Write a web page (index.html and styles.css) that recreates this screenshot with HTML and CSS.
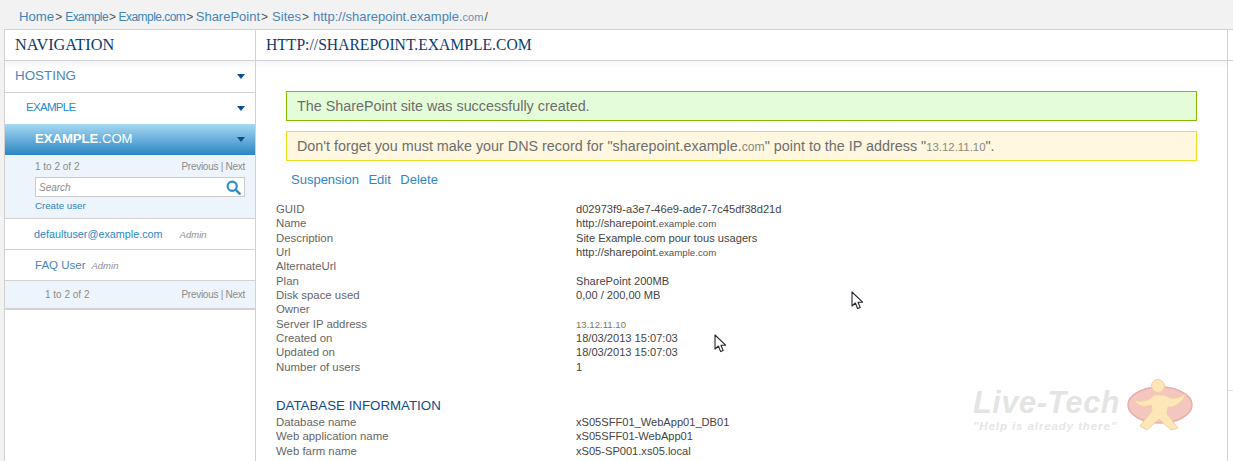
FILE: index.html
```html
<!DOCTYPE html>
<html lang="en">
<head>
    <meta charset="UTF-8">
    <title>SharePoint site</title>
    <link rel="stylesheet" href="styles.css">
</head>
<body>
    <div class="crumbs">
        <a class="big" href="#">Home</a><span class="sep">&gt;</span>
        <a class="thin" href="#">Example</a><span class="sep">&gt;</span>
        <a class="thin" href="#">Example.com</a><span class="sep">&gt;</span>
        <a class="mid" href="#">SharePoint</a><span class="sep">&gt;</span>
        <a class="mid" href="#">Sites</a><span class="sep">&gt;</span>
        <a class="mid" href="#">http://sharepoint.example.<small>com</small></a><span class="sep">/</span>
    </div>
    <div class="frame">
        <div class="sidebar">
            <h2 class="panel-title nav-title">NAVIGATION</h2>
            <div class="menu-row level1"><a href="#">HOSTING</a><i class="caret"></i></div>
            <div class="menu-row level2"><a href="#">EXAMPLE</a><i class="caret"></i></div>
            <div class="menu-row level3"><a href="#"><b>EXAMPLE</b>.COM</a><i class="caret"></i></div>
            <div class="user-tools">
                <div class="pager"><span>1 to 2 of 2</span><span class="links">Previous | Next</span></div>
                <div class="search">
                    <span>Search</span>
                    <svg width="15" height="15" viewBox="0 0 15 15"><circle cx="6.2" cy="6.2" r="4.6" fill="none" stroke="#2f8fcb" stroke-width="2.2"/><path d="M9.6 9.6 13.6 13.6" stroke="#2f8fcb" stroke-width="2.6" stroke-linecap="round"/></svg>
                </div>
                <a class="create" href="#">Create user</a>
            </div>
            <div class="user-row first"><a href="#">defaultuser@example.com</a><em>Admin</em></div>
            <div class="user-row"><a class="faq" href="#">FAQ User</a><em>Admin</em></div>
            <div class="pager bottom"><span>1 to 2 of 2</span><span class="links">Previous | Next</span></div>
        </div>
        <div class="main">
            <h2 class="panel-title">HTTP://SHAREPOINT.EXAMPLE.COM</h2>
            <div class="content">
                <div class="notice ok">The SharePoint site was successfully created.</div>
                <div class="notice warn">Don't forget you must make your DNS record for "sharepoint.example.<small>com</small>" point to the IP address "<small class="ip">13.12.11.10</small>".</div>
                <div class="actions"><a href="#">Suspension</a><a href="#">Edit</a><a href="#">Delete</a></div>
                <dl class="info">
                    <dt>GUID</dt><dd>d02973f9-a3e7-46e9-ade7-7c45df38d21d</dd>
                    <dt>Name</dt><dd>http://sharepoint.<small>example.com</small></dd>
                    <dt>Description</dt><dd>Site Example.com pour tous usagers</dd>
                    <dt>Url</dt><dd>http://sharepoint.<small>example.com</small></dd>
                    <dt>AlternateUrl</dt><dd></dd>
                    <dt>Plan</dt><dd>SharePoint 200MB</dd>
                    <dt>Disk space used</dt><dd>0,00 / 200,00 MB</dd>
                    <dt>Owner</dt><dd></dd>
                    <dt>Server IP address</dt><dd><small class="ip">13.12.11.10</small></dd>
                    <dt>Created on</dt><dd>18/03/2013 15:07:03</dd>
                    <dt>Updated on</dt><dd>18/03/2013 15:07:03</dd>
                    <dt>Number of users</dt><dd>1</dd>
                </dl>
                <h3 class="db-title">DATABASE INFORMATION</h3>
                <dl class="info">
                    <dt>Database name</dt><dd>xS05SFF01_WebApp01_DB01</dd>
                    <dt>Web application name</dt><dd>xS05SFF01-WebApp01</dd>
                    <dt>Web farm name</dt><dd>xS05-SP001.xs05.local</dd>
                </dl>
            </div>
        </div>
        <div class="edge"></div>
    </div>

    <svg class="cursor cursor-a" width="14" height="20" viewBox="0 0 14 20"><path d="M1 1V15L4.4 12 6.6 17.6 9.2 16.6 7 11.2H11.6Z" fill="#fff" stroke="#23232b" stroke-width="1.1" stroke-linejoin="round"/></svg>
    <svg class="cursor cursor-b" width="14" height="20" viewBox="0 0 14 20"><path d="M1 1V15L4.4 12 6.6 17.6 9.2 16.6 7 11.2H11.6Z" fill="#fff" stroke="#23232b" stroke-width="1.1" stroke-linejoin="round"/></svg>

    <div class="brand">
        <div class="brand-text">
            <div class="brand-name">Live-Tech</div>
            <div class="brand-tag">"Help is already there"</div>
        </div>
        <svg class="brand-mark" width="68" height="54" viewBox="0 0 68 54">
            <ellipse cx="34" cy="27" rx="32" ry="18" fill="#f3c6c0" stroke="#e8b0a8" stroke-width="1.5"/>
            <circle cx="32" cy="8" r="6.5" fill="#fde6b8" stroke="#f0cfa0"/>
            <path d="M8 22C16 25 24 22 28 17H38C44 21 52 22 60 15 57 25 48 30 42 29L41 36 52 50 45 52 33 41 21 52 14 48 26 33 25 27C18 30 12 28 8 22Z" fill="#fde6b8" stroke="#f0cfa0"/>
        </svg>
    </div>
</body>
</html>
```

FILE: styles.css
```css
html, body {height: 461px; overflow: hidden;}
body {margin: 0; background: #f2f2f2; font-family: "Liberation Sans", Arial, sans-serif; font-size: 12px; color: #555; position: relative;}
a {text-decoration: none; color: #2f86c1;}
small {font-size: 0.85em; color: #6f8fae;}

/* breadcrumb */
.crumbs {display: flex; align-items: baseline; height: 29px; box-sizing: border-box; padding: 9px 0 0 19px; line-height: 16px; white-space: nowrap; color: #555;}
.crumbs a {color: #3a86bb;}
.crumbs .big {font-size: 13.2px;}
.crumbs .thin {font-size: 12px; letter-spacing: -0.55px;}
.crumbs .mid {font-size: 13px; color: #4a85b5;}
.crumbs .sep {font-size: 12px; margin: 0 3px 0 1px;}
.crumbs .thin + .sep {margin-right: 2.5px;}
.crumbs .mid + .sep {margin-right: 4px;}

.frame {display: flex; height: 432px; margin-left: 4px; background: #fff; border-top: 1px solid #d2d2d2; border-left: 1px solid #d2d2d2;}
.panel-title {margin: 0; height: 31px; box-sizing: border-box; padding: 6px 0 0 10px; line-height: 18px; font-family: "Liberation Serif", "Times New Roman", serif; font-size: 15.65px; font-weight: normal; color: #0f3c6e; border-bottom: 1px solid #d2d2d2;}
.nav-title {font-size: 16.3px;}

/* sidebar */
.sidebar {width: 250px; flex: none; border-right: 1px solid #d2d2d2; display: flex; flex-direction: column;}
.menu-row {display: flex; align-items: center; justify-content: space-between; padding-right: 10px;}
.menu-row a {padding-bottom: 2px;}
.caret {width: 0; height: 0; border-left: 4.5px solid transparent; border-right: 4.5px solid transparent; border-top: 5px solid #0e4f87;}
.level1 {height: 31px; padding-left: 10px; font-size: 13.4px; border-bottom: 1px solid #d2d2d2; background: linear-gradient(#f3f5f8, #fff 8px);}
.level1 a {color: #4a86b8;}
.level2 {height: 31px; padding-left: 21px; font-size: 11.5px; letter-spacing: -0.7px;}
.level2 a {color: #1f8ccb; padding-bottom: 4px;}
.level3 {height: 31px; padding-left: 30px; font-size: 13.1px; background: linear-gradient(#a6d9f2, #2a85c4);}
.level3 a {color: #fff;}
.user-tools {background: #edf4fb; padding: 6px 10px 0 30px; border-bottom: 1px solid #d2d2d2; height: 64px; box-sizing: border-box;}
.pager {display: flex; justify-content: space-between; font-size: 10px; line-height: 12px; color: #8c8c8c;}
.pager .links {letter-spacing: -0.27px;}
.search {display: flex; justify-content: space-between; align-items: center; box-sizing: border-box; height: 20px; margin: 4px 0 2px; padding: 0 3px; background: #fff; border: 1px solid #ccc; font-size: 10px; font-style: italic; color: #8c8c8c;}
.create {display: block; font-size: 9.7px; line-height: 14px;}
.user-row {height: 31px; box-sizing: border-box; border-bottom: 1px solid #d2d2d2; padding-left: 30px; display: flex; align-items: center; font-size: 10.8px;}
.user-row a {color: #2f86c1;}
.user-row.first {padding-left: 29px;}
.user-row.first em {margin-left: 17px;}
.user-row em {color: #8f8f8f; font-size: 9.5px; margin-left: 6px;}
.user-row .faq {color: #4a85b5; font-size: 11.5px;}
.pager.bottom {background: #edf4fb; height: 29px; box-sizing: border-box; padding: 8px 10px 0 40px; border-bottom: 2px solid #d2d2d2;}

/* main */
.main {flex: 1; min-width: 0;}
.content {padding: 30px 30px 0 20px; background: linear-gradient(#f4f6f9, #fff 8px) top / 100% 8px no-repeat; height: 400px; box-sizing: border-box;}
.notice {box-sizing: border-box; height: 30px; margin: 0 0 10px 10px; padding: 0 10px; line-height: 29px; font-size: 14.35px; color: #6e6e6e;}
.ok {background: #e4fdd8; border: 1px solid #84bb00;}
.warn {background: #fff7e0; border: 1px solid #eedd22;}
.notice small {color: #8a8a7a;}
.actions {display: flex; gap: 9.5px; margin: 11px 0 14px 15px; font-size: 13px; line-height: 16px;}
.actions a {color: #2f86c1;}
.info {display: grid; grid-template-columns: 300px 1fr; grid-auto-rows: 14.35px; margin: 0; line-height: 14.35px; color: #444;}
.info dt {font-size: 11.4px; color: #666;}
.info dd {margin: 0; font-size: 11.1px;}
.info small {font-size: 9.7px; color: #555;}
.info small.ip {font-size: 9.6px; color: #7a7a50;}
.notice small.ip {font-size: 11.4px;}
.db-title {margin: 24px 0 1px; font-size: 13.3px; font-weight: normal; line-height: 16px; color: #0f4a8a;}

.edge {width: 5px; flex: none; border-left: 1px solid #d2d2d2; background: linear-gradient(#d2d2d2, #d2d2d2) 0 30px / 100% 1px no-repeat, linear-gradient(#e2e2e2, #e2e2e2) 0 360px / 100% 1px no-repeat;}

/* overlays */
.cursor {position: absolute;}
.cursor-a {left: 851px; top: 291px;}
.cursor-b {left: 714px; top: 334px;}
.brand {position: absolute; left: 973px; top: 378px; display: flex;}
.brand-text {padding-top: 9px;}
.brand-name {font-size: 30.5px; line-height: 30px; letter-spacing: 0.65px; font-weight: bold; font-style: italic; color: #e4e4e4; white-space: nowrap;}
.brand-tag {margin-top: 3px; font-size: 11.5px; line-height: 12px; font-weight: bold; font-style: italic; letter-spacing: 0.9px; color: #e6e6e6; white-space: nowrap;}
.brand-mark {margin-left: 6px;}
```
